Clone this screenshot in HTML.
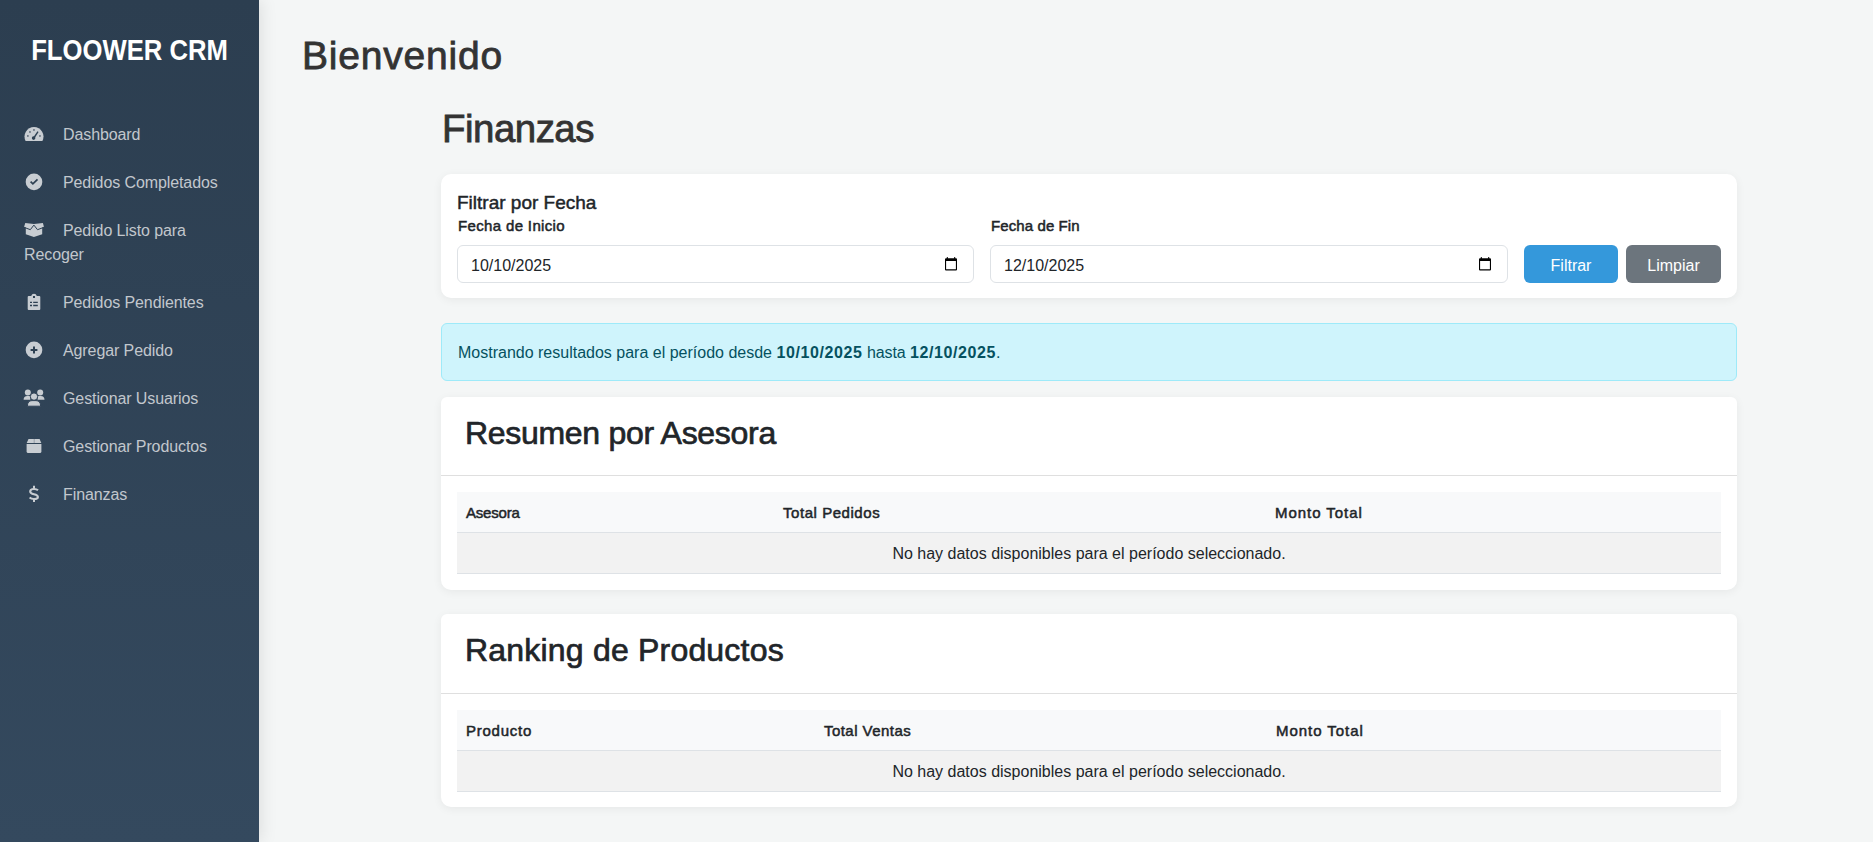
<!DOCTYPE html>
<html lang="es">
<head>
<meta charset="utf-8">
<title>Floower CRM - Finanzas</title>
<style>
*{box-sizing:border-box;margin:0;padding:0}
html,body{width:1873px;height:842px;overflow:hidden}
body{font-family:"Liberation Sans",sans-serif;background:#f4f6f6;color:#212529;position:relative}
.abs{position:absolute}
.sidebar{position:absolute;left:0;top:0;width:259px;height:842px;background:linear-gradient(180deg,#2c3e50 0%,#34495e 100%);box-shadow:2px 0 16px rgba(0,0,0,.1);color:#fff;z-index:2}
.brand{position:absolute;left:0;top:30px;width:259px;text-align:center;font-weight:bold;font-size:29px;line-height:40px;color:#fff;transform:scaleX(.885)}
.nav a{position:absolute;left:63px;color:#c2c7cd;font-size:16px;line-height:24px;text-decoration:none;white-space:nowrap;letter-spacing:-.1px}
.nav svg{position:absolute;fill:#c9ced4}
h1{font-weight:normal;font-size:40px;line-height:48px;color:#333;position:absolute;white-space:nowrap;-webkit-text-stroke:.8px #333}
.card{position:absolute;left:441px;width:1296px;background:#fff;border-radius:10px;box-shadow:0 2px 10px rgba(0,0,0,.06)}
.t{position:absolute;white-space:nowrap}
.h5{font-size:19px;line-height:24px;color:#212529;-webkit-text-stroke:.45px #212529}
.lbl{font-size:15px;line-height:22px;color:#212529;-webkit-text-stroke:.5px #212529;letter-spacing:.35px}
.inp{position:absolute;top:245px;height:38px;background:#fff;border:1px solid #dee2e6;border-radius:6px}
.inp span{position:absolute;left:13px;top:9px;font-size:16px;line-height:22px;color:#212529}
.inp svg{position:absolute;right:16px;top:10.8px}
.btn{position:absolute;top:245px;height:38px;border-radius:6px;color:#fff;font-size:16px;line-height:41px;text-align:center}
.alert{position:absolute;left:441px;top:323px;width:1296px;height:58px;background:#cff4fc;border:1px solid #9eeaf9;border-radius:6px;color:#055160;font-size:16px}
.alert span{position:absolute;left:16px;top:17px;line-height:24px;white-space:nowrap}
.alert b{letter-spacing:.6px}
.alert i{font-style:normal;letter-spacing:-.12px}
.h2{font-size:32px;line-height:38px;color:#212529;-webkit-text-stroke:.7px #212529}
.hr{position:absolute;left:441px;width:1296px;height:1px;background:#dfdfdf}
.thead{position:absolute;left:457px;width:1264px;height:41px;background:#f8f9fa;border-bottom:1px solid #dee2e6}
.trow{position:absolute;left:457px;width:1264px;height:41px;background:#f2f2f2;border-bottom:1px solid #dee2e6}
.th{font-size:15px;line-height:22px;color:#212529;-webkit-text-stroke:.5px #212529;letter-spacing:.35px}
.td{font-size:16px;line-height:24px;color:#212529}
</style>
</head>
<body>
<div class="sidebar">
  <div class="brand">FLOOWER CRM</div>
  <svg class="icons" width="259" height="842" viewBox="0 0 259 842" style="position:absolute;left:0;top:0">
  <g fill="#c8cdd2">
    <!-- gauge -->
    <path d="M25.6 141 A9.5 9.5 0 1 1 42.4 141 Z"/>
    <!-- check circle -->
    <circle cx="34" cy="181.9" r="8.3"/>
    <!-- box open: flaps -->
    <path d="M25.3 223.1 L33.9 223.9 L42.9 223.1 L43.9 226.7 L42.2 227.6 L42.2 234.3 L33.9 236.9 L25.8 234.3 L25.8 227.6 L24.1 226.7 Z"/>
    <!-- clipboard -->
    <path d="M28.7 295.9 H31.2 A2.9 2.9 0 0 1 36.8 295.9 H39.3 A1 1 0 0 1 40.3 296.9 V308.9 A1 1 0 0 1 39.3 309.9 H28.7 A1 1 0 0 1 27.7 308.9 V296.9 A1 1 0 0 1 28.7 295.9 Z"/>
    <!-- plus circle -->
    <circle cx="34" cy="349.9" r="8.3"/>
    <!-- users -->
    <circle cx="27.8" cy="392.4" r="3"/>
    <circle cx="40.2" cy="392.4" r="3"/>
    <path d="M23.6 399.8 Q23.6 395.9 27.3 395.9 H30.3 V399.8 Z"/>
    <path d="M44.5 399.8 Q44.5 395.9 40.8 395.9 H37.6 V399.8 Z"/>
    <circle cx="34" cy="396.6" r="3.7" stroke="#304357" stroke-width="1"/>
    <path d="M27.4 406.2 Q27.4 400.6 32 400.6 H36 Q40.6 400.6 40.6 406.2 Z" stroke="#304357" stroke-width="1"/>
    <!-- box -->
    <path d="M28.5 438.9 H39.6 L41.3 442.9 H26.7 Z"/>
    <path d="M26.6 443.9 H41.4 V451.5 A1.5 1.5 0 0 1 39.9 453 H28.1 A1.5 1.5 0 0 1 26.6 451.5 Z"/>
  </g>
  <g fill="none" stroke="#2d4052">
    <!-- gauge details -->
    <g fill="#2d4052" stroke="none">
      <rect x="27" y="135.1" width="1.7" height="1.7" fill="#66727f"/>
      <rect x="29.1" y="131.1" width="1.7" height="1.7" fill="#66727f"/>
      <rect x="33.1" y="129.1" width="1.7" height="1.7" fill="#66727f"/>
      <rect x="39.1" y="135.1" width="1.7" height="1.7" fill="#66727f"/>
      <circle cx="33.6" cy="138.1" r="1.8"/>
    </g>
    <path d="M33.8 138 L38 131.6" stroke-width="1.4"/>
    <!-- check -->
    <path d="M30.6 181.6 L32.9 183.9 L37.5 179.3" stroke-width="1.7"/>
    <!-- clipboard -->
    <g fill="#2d4052" stroke="none"><rect x="33" y="296" width="2" height="2"/></g>
    <path d="M30 302.4 H32 M33.2 302.4 H37.8 M30 305.5 H32 M33.2 305.5 H37.8" stroke-width="1.3"/>
    <!-- plus -->
    <path d="M30.6 349.9 H37.4 M34 346.4 V353.4" stroke-width="2"/>
    <!-- box lid line -->
    <path d="M34.2 439 V443" stroke-width="0.8" stroke="#8d96a0"/>
    <path d="M24.6 227.5 L30.3 229.7 L33.9 225.1 L37.5 229.7 L43.4 227.5" stroke-width="1"/>
  </g>
  <!-- dollar -->
  <path d="M38 490.3 Q36.6 489 34 489 Q30.2 489 30.2 491.5 Q30.2 493.4 34 494.2 Q37.9 495 37.9 496.9 Q37.9 499 34 499 Q31.2 499 29.6 497.5" fill="none" stroke="#c8cdd2" stroke-width="2.1"/><path d="M33 485.8h2v3h-2zM33 499h2v3h-2z" fill="#c8cdd2"/>
</svg>
  <div class="nav">
    <a style="top:123px">Dashboard</a>
    <a style="top:171px">Pedidos Completados</a>
    <a style="top:219px">Pedido Listo para</a>
    <a style="top:243px;left:24px">Recoger</a>
    <a style="top:291px">Pedidos Pendientes</a>
    <a style="top:339px">Agregar Pedido</a>
    <a style="top:387px">Gestionar Usuarios</a>
    <a style="top:435px">Gestionar Productos</a>
    <a style="top:483px">Finanzas</a>
  </div>
</div>

<h1 style="left:302px;top:32px;font-size:39px;letter-spacing:.8px">Bienvenido</h1>
<h1 style="left:442px;top:105px;font-size:39px;letter-spacing:-.5px;transform:scaleX(.985);transform-origin:0 0">Finanzas</h1>

<!-- Filter card -->
<div class="card" style="top:174px;height:124px"></div>
<div class="t h5" style="left:457px;top:191px">Filtrar por Fecha</div>
<div class="t lbl" style="left:458px;top:215px">Fecha de Inicio</div>
<div class="t lbl" style="left:991px;top:215px;letter-spacing:.1px">Fecha de Fin</div>
<div class="inp" style="left:457px;width:517px"><span>10/10/2025</span>
  <svg width="12" height="14" viewBox="0 0 12 14"><path fill-rule="evenodd" d="M1 1.2h10a1 1 0 0 1 1 1V12.4a1 1 0 0 1-1 1H1a1 1 0 0 1-1-1V2.2a1 1 0 0 1 1-1zM1.1 4v8.3h9.8V4z M1.8 0h1v1.3h-1z M9.2 0h1v1.3h-1z" fill="#000"/></svg></div>
<div class="inp" style="left:990px;width:518px"><span>12/10/2025</span>
  <svg width="12" height="14" viewBox="0 0 12 14"><path fill-rule="evenodd" d="M1 1.2h10a1 1 0 0 1 1 1V12.4a1 1 0 0 1-1 1H1a1 1 0 0 1-1-1V2.2a1 1 0 0 1 1-1zM1.1 4v8.3h9.8V4z M1.8 0h1v1.3h-1z M9.2 0h1v1.3h-1z" fill="#000"/></svg></div>
<div class="btn" style="left:1524px;width:94px;background:#3498db">Filtrar</div>
<div class="btn" style="left:1626px;width:95px;background:#6c757d">Limpiar</div>

<!-- Alert -->
<div class="alert"><span>Mostrando resultados para el período desde <b>10/10/2025</b> <i>hasta</i> <b>12/10/2025</b>.</span></div>

<!-- Resumen card -->
<div class="card" style="top:397px;height:193px;border-radius:6px 6px 10px 10px"></div>
<div class="t h2" style="left:465px;top:414px;letter-spacing:-.3px">Resumen por Asesora</div>
<div class="hr" style="top:475px"></div>
<div class="thead" style="top:492px"></div>
<div class="trow" style="top:533px"></div>
<div class="t th" style="left:466px;top:502px;letter-spacing:-.2px">Asesora</div>
<div class="t th" style="left:783px;top:502px;letter-spacing:.55px">Total Pedidos</div>
<div class="t th" style="left:1275px;top:502px;letter-spacing:.95px">Monto Total</div>
<div class="t td" style="left:457px;width:1264px;text-align:center;top:542px">No hay datos disponibles para el período seleccionado.</div>

<!-- Ranking card -->
<div class="card" style="top:614px;height:193px;border-radius:6px 6px 10px 10px"></div>
<div class="t h2" style="left:465px;top:631px;letter-spacing:.2px">Ranking de Productos</div>
<div class="hr" style="top:693px"></div>
<div class="thead" style="top:710px"></div>
<div class="trow" style="top:751px"></div>
<div class="t th" style="left:466px;top:720px;letter-spacing:.75px">Producto</div>
<div class="t th" style="left:824px;top:720px;letter-spacing:.45px">Total Ventas</div>
<div class="t th" style="left:1276px;top:720px;letter-spacing:.95px">Monto Total</div>
<div class="t td" style="left:457px;width:1264px;text-align:center;top:760px">No hay datos disponibles para el período seleccionado.</div>
</body>
</html>
